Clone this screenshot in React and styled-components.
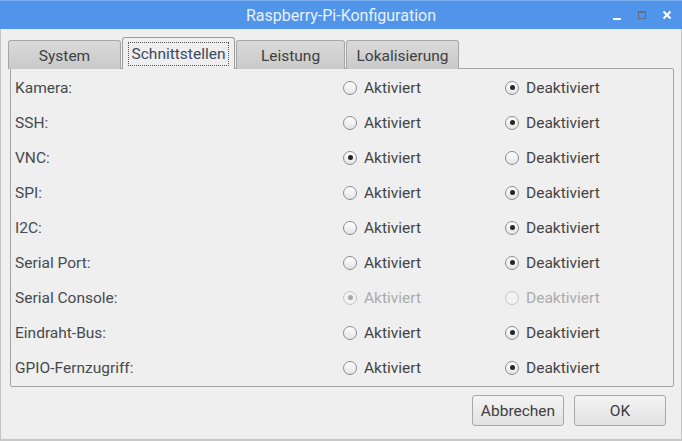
import React from "react";
import styled, { createGlobalStyle, css } from "styled-components";

const Global = createGlobalStyle`
  html, body { margin: 0; padding: 0; background: #efefef; }
  body { font-family: Roboto, "Noto Sans", "Liberation Sans", sans-serif; }
  * { box-sizing: border-box; }
`;

const Window = styled.div`
  width: 682px;
  height: 441px;
  display: flex;
  flex-direction: column;
  background: #efefef;
  border-left: 1px solid #c4c4c4;
  border-right: 1px solid #c4c4c4;
  border-bottom: 2px solid #c8c8c8;
`;

const TitleBar = styled.div`
  height: 29px;
  flex: none;
  background: #5195ea;
  border-top: 1px solid #7aaef0;
  display: flex;
  align-items: center;
  justify-content: center;
  position: relative;
  color: #e8f0fb;
  font-size: 16px;
  margin: 0 -1px;
`;

const TitleText = styled.span`
  padding-top: 1px;
`;

const Controls = styled.div`
  position: absolute;
  right: 8px;
  top: 0;
  height: 100%;
  display: flex;
  align-items: center;
  gap: 11px;
`;

const Body = styled.div`
  flex: 1;
  display: flex;
  flex-direction: column;
  padding: 8px 8px 0 7px;
`;

const TabBar = styled.div`
  display: flex;
  align-items: flex-end;
  height: 32px;
  position: relative;
  z-index: 1;
  margin-bottom: -1px;
`;

const Tab = styled.div`
  width: ${(p) => p.$w}px;
  height: 29px;
  display: flex;
  align-items: center;
  justify-content: center;
  font-size: 15.5px;
  color: #404040;
  border: 1px solid #a6a6a6;
  border-bottom: none;
  border-radius: 3px 3px 0 0;
  background: linear-gradient(#dadada, #c9c9c9);
  margin-right: 1px;
  padding-top: 2px;
  ${(p) =>
    p.$active &&
    css`
      height: 32px;
      background: #efefef;
      border-color: #9c9c9c;
      padding: 4px 5px 3px;
    `}
`;

const Focus = styled.span`
  flex: 1;
  align-self: stretch;
  display: flex;
  align-items: center;
  justify-content: center;
  border: 1px dotted #555;
  color: #3b4a5c;
`;

const Panel = styled.div`
  margin-left: 2px;
  width: 664px;
  height: 319px;
  border: 1px solid #a4a4a4;
  border-radius: 0 2px 2px 2px;
  background: #efefef;
  padding: 1px 0 0 4px;
  display: grid;
  grid-template-rows: repeat(9, 35px);
`;

const Row = styled.div`
  display: grid;
  grid-template-columns: 328px 162px 1fr;
  align-items: center;
  font-size: 15.5px;
  color: ${(p) => (p.$disabled ? "#ababab" : "#444444")};
`;

const Label = styled.span`
  color: #464a4e;
`;

const Option = styled.label`
  display: flex;
  align-items: center;
  gap: 7px;
`;

const Radio = styled.span`
  width: 14px;
  height: 14px;
  border-radius: 50%;
  border: 1px solid ${(p) => (p.$disabled ? "#c4c4c4" : "#8c8c8c")};
  background: ${(p) =>
    p.$disabled ? "#f2f2f2" : "linear-gradient(#ffffff, #e4e4e4)"};
  display: flex;
  align-items: center;
  justify-content: center;
  &::after {
    content: "";
    width: 5px;
    height: 5px;
    border-radius: 50%;
    background: ${(p) => (p.$disabled ? "#a8a8a8" : "#262626")};
    display: ${(p) => (p.$checked ? "block" : "none")};
  }
`;

const Footer = styled.div`
  display: flex;
  justify-content: flex-end;
  gap: 10px;
  padding: 8px 7px 0 0;
`;

const Button = styled.button`
  width: 92px;
  height: 31px;
  font-family: Roboto, "Noto Sans", sans-serif;
  font-size: 15.5px;
  color: #404040;
  border: 1px solid #a8a8a8;
  border-radius: 3px;
  background: linear-gradient(#f4f4f4, #e2e2e2);
  padding: 0;
`;

const rows = [
  ["Kamera:", false],
  ["SSH:", false],
  ["VNC:", true],
  ["SPI:", false],
  ["I2C:", false],
  ["Serial Port:", false],
  ["Serial Console:", true, true],
  ["Eindraht-Bus:", false],
  ["GPIO-Fernzugriff:", false],
];

const tabs = [
  ["System", 113],
  ["Schnittstellen", 113, true],
  ["Leistung", 109],
  ["Lokalisierung", 113],
];

export default function App() {
  return (
    <>
      <Global />
      <Window>
        <TitleBar>
          <TitleText>Raspberry-Pi-Konfiguration</TitleText>
          <Controls>
            <svg width="14" height="14" viewBox="0 0 14 14">
              <rect x="3" y="10" width="8" height="2" fill="#ffffff" />
            </svg>
            <svg width="14" height="14" viewBox="0 0 14 14">
              <rect x="3.5" y="3.5" width="7" height="7" fill="none" stroke="#5f6f85" strokeWidth="1" />
              <rect x="3" y="3" width="8" height="2" fill="#5f6f85" />
            </svg>
            <svg width="14" height="14" viewBox="0 0 14 14">
              <path d="M3.5 3.5 L10.5 10.5 M10.5 3.5 L3.5 10.5" stroke="#ffffff" strokeWidth="2" />
            </svg>
          </Controls>
        </TitleBar>
        <Body>
          <TabBar>
            {tabs.map(([t, w, a]) => (
              <Tab key={t} $w={w} $active={a}>
                {a ? <Focus>{t}</Focus> : t}
              </Tab>
            ))}
          </TabBar>
          <Panel>
            {rows.map(([label, on, dis]) => (
              <Row key={label} $disabled={dis}>
                <Label>{label}</Label>
                <Option>
                  <Radio $checked={on} $disabled={dis} />
                  Aktiviert
                </Option>
                <Option>
                  <Radio $checked={!on} $disabled={dis} />
                  Deaktiviert
                </Option>
              </Row>
            ))}
          </Panel>
          <Footer>
            <Button>Abbrechen</Button>
            <Button>OK</Button>
          </Footer>
        </Body>
      </Window>
    </>
  );
}
